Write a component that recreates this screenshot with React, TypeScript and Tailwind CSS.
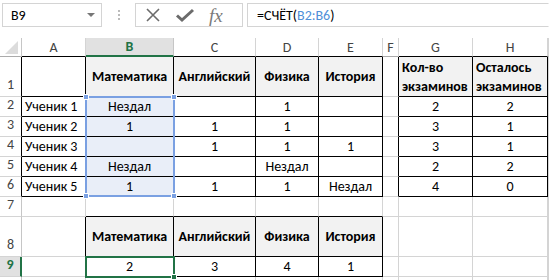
import React from 'react'

const FONT = { fontFamily: 'Carlito, Lato, "Open Sans", sans-serif' }

// table contents, rows 1..9, cols A..H
type Cell = { t?: string; b?: boolean; fill?: boolean; align?: 'l' | 'c'; wrap?: boolean }

const data: Record<string, Cell> = {
  '1-2': { t: 'Математика', b: true, fill: true },
  '1-3': { t: 'Английский', b: true, fill: true },
  '1-4': { t: 'Физика', b: true, fill: true },
  '1-5': { t: 'История', b: true, fill: true },
  '1-7': { t: 'Кол-во экзаминов', b: true, fill: true, align: 'l', wrap: true },
  '1-8': { t: 'Осталось экзаминов', b: true, fill: true, align: 'l', wrap: true },
  '2-1': { t: 'Ученик 1', align: 'l' },
  '2-2': { t: 'Нездал' },
  '2-4': { t: '1' },
  '2-7': { t: '2' },
  '2-8': { t: '2' },
  '3-1': { t: 'Ученик 2', align: 'l' },
  '3-2': { t: '1' },
  '3-3': { t: '1' },
  '3-4': { t: '1' },
  '3-7': { t: '3' },
  '3-8': { t: '1' },
  '4-1': { t: 'Ученик 3', align: 'l' },
  '4-3': { t: '1' },
  '4-4': { t: '1' },
  '4-5': { t: '1' },
  '4-7': { t: '3' },
  '4-8': { t: '1' },
  '5-1': { t: 'Ученик 4', align: 'l' },
  '5-2': { t: 'Нездал' },
  '5-4': { t: 'Нездал' },
  '5-7': { t: '2' },
  '5-8': { t: '2' },
  '6-1': { t: 'Ученик 5', align: 'l' },
  '6-2': { t: '1' },
  '6-3': { t: '1' },
  '6-4': { t: '1' },
  '6-5': { t: 'Нездал' },
  '6-7': { t: '4' },
  '6-8': { t: '0' },
  '8-2': { t: 'Математика', b: true, fill: true },
  '8-3': { t: 'Английский', b: true, fill: true },
  '8-4': { t: 'Физика', b: true, fill: true },
  '8-5': { t: 'История', b: true, fill: true },
  '9-2': { t: '2' },
  '9-3': { t: '3' },
  '9-4': { t: '4' },
  '9-5': { t: '1' },
}

const letters = ['', 'A', 'B', 'C', 'D', 'E', 'F', 'G', 'H', '']
const rows = [1, 2, 3, 4, 5, 6, 7, 8, 9, 10]

const inTable = (r: number, c: number) =>
  (r >= 1 && r <= 6 && c >= 1 && c <= 5) ||
  (r >= 1 && r <= 6 && c >= 7 && c <= 8) ||
  (r >= 8 && r <= 9 && c >= 2 && c <= 5)

const inRange = (r: number, c: number) => c === 2 && r >= 2 && r <= 6

function Toolbar() {
  return (
    <div className="flex h-[38px] items-start pt-[3px] pl-[2px] bg-white">
      <div className="flex h-[24px] w-[100px] items-center justify-between border border-[#d4d4d4] pl-[8px] pr-[6px] text-[14px] text-black">
        <span>B9</span>
        <span className="h-0 w-0 border-x-[4px] border-t-[4px] border-x-transparent border-t-[#777]" />
      </div>
      <div className="flex h-[24px] w-[33px] flex-col items-center justify-center gap-[2px]">
        <span className="h-[2px] w-[2px] bg-[#bbb]" />
        <span className="h-[2px] w-[2px] bg-[#bbb]" />
        <span className="h-[2px] w-[2px] bg-[#bbb]" />
      </div>
      <div className="flex h-[24px] w-[108px] items-center gap-[14px] border border-[#d4d4d4] pl-[9px]">
        <svg width="16" height="16" viewBox="0 0 16 16">
          <path d="M2 2 L14 14 M14 2 L2 14" stroke="#6b6b6b" strokeWidth="1.6" fill="none" />
        </svg>
        <svg width="20" height="16" viewBox="0 0 20 16">
          <path d="M2 8.5 L7 13 L18 3" stroke="#6b6b6b" strokeWidth="3" fill="none" />
        </svg>
        <span
          className="text-[19px] italic leading-none text-[#7a7a7a]"
          style={{ fontFamily: '"Liberation Serif", "DejaVu Serif", serif' }}
        >
          fx
        </span>
      </div>
      <div className="ml-[4px] flex h-[24px] flex-1 items-center border border-y-[#d4d4d4] border-l-[#d4d4d4] border-r-transparent pl-[9px] text-[14px] text-black">
        <span>=СЧЁТ(</span>
        <span className="text-[#4f8fd8]">B2:B6</span>
        <span>)</span>
      </div>
    </div>
  )
}

function HeaderCell({ c }: { c: number }) {
  if (c === 0) {
    return (
      <div className="relative border-r border-b border-r-[#c6c6c6] border-b-[#ababab] bg-white">
        <svg className="absolute bottom-[2px] right-[3px]" width="13" height="13" viewBox="0 0 13 13">
          <path d="M13 0 L13 13 L0 13 Z" fill="#dcdcdc" />
        </svg>
      </div>
    )
  }
  if (c === 2) {
    return (
      <div className="flex items-center justify-center border-r border-b-2 border-r-[#c6c6c6] border-b-[#217346] bg-[#e1e1e1] text-[14px] font-bold text-[#217346]">
        B
      </div>
    )
  }
  const below = inTable(1, c)
  return (
    <div
      className={`flex items-center justify-center border-r border-b border-r-[#d4d4d4] bg-white text-[14px] text-[#444] ${
        below ? 'border-b-black' : 'border-b-[#ababab]'
      }`}
    >
      {letters[c]}
    </div>
  )
}

function RowHeader({ r }: { r: number }) {
  if (r === 9) {
    return (
      <div className="flex items-end justify-center border-r-2 border-b border-r-[#217346] border-b-[#d4d4d4] bg-[#e1e1e1] pb-[1px] font-bold text-[#217346]">
        9
      </div>
    )
  }
  return (
    <div
      className={`flex items-end justify-center border-r border-b border-b-[#d4d4d4] bg-white pb-[1px] text-[#444] ${
        inTable(r, 1) ? 'border-r-black' : 'border-r-[#c6c6c6]'
      }`}
    >
      {r < 10 ? r : ''}
    </div>
  )
}

function DataCell({ r, c }: { r: number; c: number }) {
  const cell = data[`${r}-${c}`] || {}
  const blackR = inTable(r, c) || inTable(r, c + 1)
  const blackB = inTable(r, c) || inTable(r + 1, c)
  const bg = cell.fill ? 'bg-[#f2f2f2]' : inRange(r, c) ? 'bg-[#e9eef8]' : 'bg-white'
  return (
    <div
      className={`flex items-center overflow-visible whitespace-nowrap border-r border-b text-black ${bg} ${
        blackR ? 'border-r-black' : 'border-r-[#d4d4d4]'
      } ${blackB ? 'border-b-black' : 'border-b-[#d4d4d4]'} ${
        cell.align === 'l' ? 'justify-start pl-[3px]' : 'justify-center'
      } ${cell.b ? 'font-bold' : ''}`}
    >
      {cell.wrap ? (
        <span className="whitespace-normal leading-[19px]">{cell.t}</span>
      ) : (
        cell.t
      )}
    </div>
  )
}

function Sheet() {
  return (
    <div className="relative grid grid-cols-[22px_64px_88px_82px_63px_64px_16px_74px_75px_1fr] grid-rows-[19px_40px_20px_20px_20px_20px_20px_20px_40px_20px_20px] text-[14px]">
      {letters.map((_, c) => (
        <HeaderCell key={`h${c}`} c={c} />
      ))}
      {rows.map((r) =>
        letters.map((_, c) =>
          c === 0 ? <RowHeader key={`${r}-${c}`} r={r} /> : <DataCell key={`${r}-${c}`} r={r} c={c} />
        )
      )}

      {/* reference range B2:B6 */}
      <div className="pointer-events-none absolute left-[85px] top-[58px] h-[101px] w-[90px] border-2 border-[#7aa0e2]">
        <span className="absolute -left-[4px] -top-[4px] h-[6px] w-[6px] border border-white bg-[#7aa0e2]" />
        <span className="absolute -right-[4px] -top-[4px] h-[6px] w-[6px] border border-white bg-[#7aa0e2]" />
        <span className="absolute -bottom-[4px] -left-[4px] h-[6px] w-[6px] border border-white bg-[#7aa0e2]" />
        <span className="absolute -bottom-[4px] -right-[4px] h-[6px] w-[6px] border border-white bg-[#7aa0e2]" />
      </div>

      {/* active cell B9 */}
      <div className="pointer-events-none absolute left-[85px] top-[218px] h-[22px] w-[90px] border-2 border-[#217346]">
        <span className="absolute -bottom-[4px] -right-[4px] h-[6px] w-[6px] border border-white bg-[#217346]" />
      </div>
    </div>
  )
}

export default function App() {
  return (
    <div className="h-[280px] w-[549px] overflow-hidden bg-white" style={FONT}>
      <Toolbar />
      <Sheet />
    </div>
  )
}
